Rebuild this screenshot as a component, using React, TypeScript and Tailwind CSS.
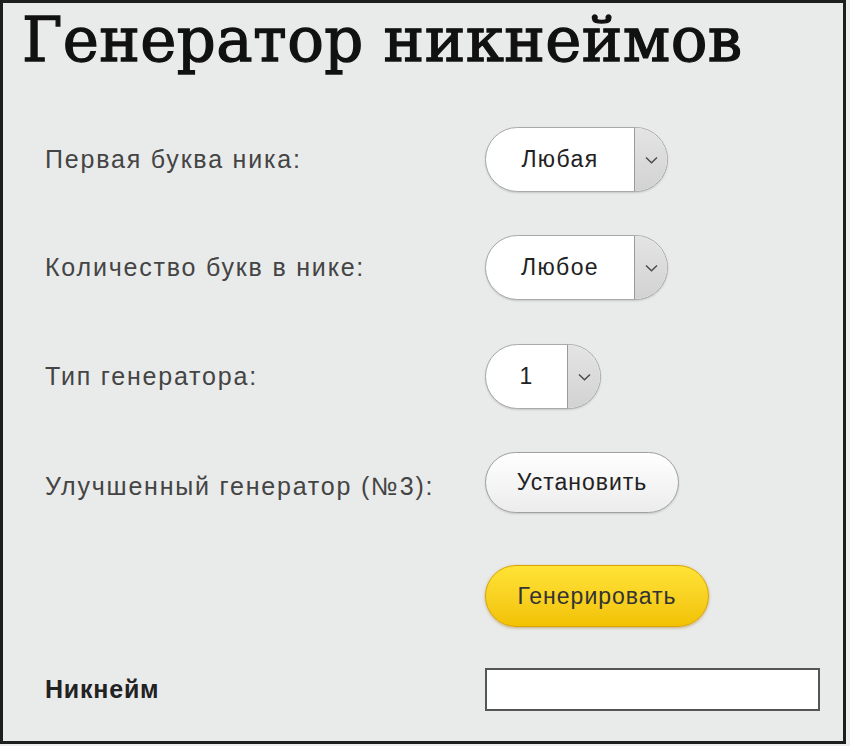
import React from 'react';

const Chevron: React.FC = () => (
  <svg width="13" height="8" viewBox="0 0 13 8" fill="none">
    <path d="M1 1.5 L6.5 6.8 L12 1.5" stroke="#4a4a4a" strokeWidth="1.4" />
  </svg>
);

interface SelectProps {
  value: string;
  width: string;
}

const PillSelect: React.FC<SelectProps> = ({ value, width }) => (
  <div
    className={`flex h-[65px] ${width} overflow-hidden rounded-full border border-[#a9a9a9] bg-white shadow-[0_1px_2px_rgba(0,0,0,0.15)]`}
  >
    <div className="flex flex-1 items-center justify-center text-[23px] tracking-[1.4px] text-[#222]">
      {value}
    </div>
    <div className="flex w-[33px] items-center justify-center border-l border-[#9a9a9a] bg-gradient-to-b from-[#e4e4e4] to-[#d2d2d2]">
      <Chevron />
    </div>
  </div>
);

const Label: React.FC<{ children: React.ReactNode; bold?: boolean }> = ({ children, bold }) => (
  <div
    className={`w-[482px] pl-[42px] text-[25px] ${
      bold ? 'font-bold tracking-[0.8px] text-[#222]' : 'tracking-[1.8px] text-[#444]'
    }`}
  >
    {children}
  </div>
);

export default function App() {
  return (
    <div className="h-[746px] w-[850px] bg-[#eeeeee] font-['Liberation_Sans',Arial,sans-serif]">
      <div className="h-[744px] w-[846px] border-[3px] border-[#1e1e1e] bg-[#e9eaea]">
        <h1 className="pl-[19px] pt-[2px] font-['DejaVu_Serif',serif] text-[61px] leading-[70px] tracking-[0.4px] text-[#111] [-webkit-text-stroke:1.3px_#111]">
          Генератор никнеймов
        </h1>

        <div className="mt-[52px] flex flex-col">
          <div className="flex items-center">
            <Label>Первая буква ника:</Label>
            <PillSelect value="Любая" width="w-[183px]" />
          </div>

          <div className="mt-[43px] flex items-center">
            <Label>Количество букв в нике:</Label>
            <PillSelect value="Любое" width="w-[183px]" />
          </div>

          <div className="mt-[44px] flex items-center">
            <Label>Тип генератора:</Label>
            <PillSelect value="1" width="w-[116px]" />
          </div>

          <div className="mt-[43px] flex items-center">
            <div className="pt-[8px]">
              <Label>Улучшенный генератор (№3):</Label>
            </div>
            <button className="h-[61px] w-[194px] rounded-full border border-[#a0a0a0] bg-gradient-to-b from-[#ffffff] to-[#ececec] text-[23px] tracking-[1px] text-[#222] shadow-[0_1px_2px_rgba(0,0,0,0.15)]">
              Установить
            </button>
          </div>

          <div className="mt-[52px] flex items-center">
            <div className="w-[482px]" />
            <button className="h-[62px] w-[224px] rounded-full border border-[#d9a400] bg-gradient-to-b from-[#ffe335] to-[#f2c200] text-[23px] tracking-[1px] text-[#333] shadow-[0_1px_3px_rgba(160,110,0,0.5)]">
              Генерировать
            </button>
          </div>

          <div className="mt-[41px] flex items-center">
            <Label bold>Никнейм</Label>
            <div className="h-[43px] w-[335px] border-2 border-[#555] bg-white" />
          </div>
        </div>
      </div>
    </div>
  );
}
